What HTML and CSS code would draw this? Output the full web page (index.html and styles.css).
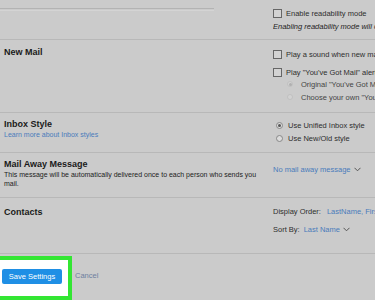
FILE: index.html
```html
<!DOCTYPE html>
<html>
<head>
<meta charset="utf-8">
<link rel="stylesheet" href="styles.css">
</head>
<body>
<div class="page">
  <section class="sec s1">
    <div class="left"><div class="toplines"></div></div>
    <div class="right">
      <div class="opt"><span class="cb"></span>Enable readability mode</div>
      <div class="note">Enabling readability mode will change how messages look</div>
    </div>
  </section>

  <section class="sec s2">
    <div class="left"><h2>New Mail</h2></div>
    <div class="right">
      <div class="opt"><span class="cb"></span>Play a sound when new mail arrives</div>
      <div class="opt o2"><span class="cb"></span>Play "You've Got Mail" alert</div>
      <div class="opt sub r1"><span class="rd dis on"></span>Original "You've Got Mail" sound</div>
      <div class="opt sub r2"><span class="rd dis"></span>Choose your own "You've Got Mail" sound</div>
    </div>
  </section>

  <section class="sec s3">
    <div class="left">
      <h2>Inbox Style</h2>
      <a class="link">Learn more about Inbox styles</a>
    </div>
    <div class="right">
      <div class="opt inb"><span class="rd on"></span>Use Unified Inbox style</div>
      <div class="opt inb i2"><span class="rd"></span>Use New/Old style</div>
    </div>
  </section>

  <section class="sec s4">
    <div class="left">
      <h2>Mail Away Message</h2>
      <p class="desc">This message will be automatically delivered once to each person who sends you mail.</p>
    </div>
    <div class="right">
      <div class="opt drop"><span class="blue">No mail away message</span><svg class="chev" width="7" height="5" viewBox="0 0 7 5"><polyline points="0.5,0.8 3.5,3.8 6.5,0.8" fill="none" stroke="#555" stroke-width="1"/></svg></div>
    </div>
  </section>

  <section class="sec s5">
    <div class="left"><h2>Contacts</h2></div>
    <div class="right">
      <div class="opt kv k1"><span class="key">Display Order:</span><span class="blue v1">LastName, FirstName</span></div>
      <div class="opt kv k2"><span class="key">Sort By:</span><span class="blue v2">Last Name</span><svg class="chev" width="7" height="5" viewBox="0 0 7 5"><polyline points="0.5,0.8 3.5,3.8 6.5,0.8" fill="none" stroke="#555" stroke-width="1"/></svg></div>
    </div>
  </section>

  <section class="bottom">
    <div class="hl"><button class="save">Save Settings</button></div>
    <a class="cancel">Cancel</a>
  </section>
</div>
</body>
</html>
```

FILE: styles.css
```css
* { box-sizing: border-box; margin: 0; padding: 0; }
html, body { width: 375px; height: 300px; overflow: hidden; }
body {
  background: #cbcbcb;
  font-family: "Liberation Sans", Arial, sans-serif;
  color: #2a2a2a;
}
.page { width: 375px; }
.sec { display: flex; border-top: 1px solid #b8b8b8; }
.s1 { border-top: none; height: 39px; }
.s2 { height: 73px; }
.s3 { height: 40px; }
.s4 { height: 45px; }
.s5 { height: 56px; }

.left { width: 273px; flex: none; padding-left: 4px; }
.right { flex: 1; min-width: 0; white-space: nowrap; overflow: hidden; }

.toplines {
  width: 214px;
  margin-left: -4px;
  margin-top: 8px;
  height: 3px;
  border-top: 1px solid #b3b3b3;
  border-bottom: 1px solid #d4d4d4;
}

h2 {
  font-size: 9px;
  font-weight: bold;
  line-height: 10px;
  color: #1a1a1a;
}
.s2 h2 { padding-top: 7px; }
.s3 h2 { padding-top: 6px; }
.s4 h2 { padding-top: 6px; }
.s5 h2 { padding-top: 9px; }

.link {
  display: block;
  margin-top: 1px;
  font-size: 7px;
  line-height: 10px;
  color: #4a7bbb;
}
.desc {
  margin-top: 1px;
  font-size: 7px;
  line-height: 9px;
  color: #222;
  width: 262px;
}

.opt {
  display: flex;
  align-items: center;
  height: 10px;
  font-size: 7.5px;
  color: #2e2e2e;
  gap: 4px;
}
.note {
  margin-top: 4px;
  font-size: 7.5px;
  font-style: italic;
  line-height: 9px;
  color: #222;
}
.s1 .right { padding-top: 8px; }
.s2 .right { padding-top: 9px; }
.s2 .o2 { margin-top: 8px; }
.sub { padding-left: 14px; gap: 8px; color: #444; }
.r1 { margin-top: 2px; }
.r2 { margin-top: 3px; }

.s3 .right { padding-top: 7px; }
.inb { padding-left: 3px; gap: 5px; }
.i2 { margin-top: 3px; }

.s4 .right { padding-top: 11px; }
.drop { gap: 3px; }

.s5 .right { padding-top: 8px; }
.k2 { margin-top: 8px; }
.kv { gap: 0; }
.v1 { margin-left: 6px; }
.v2 { margin-left: 4px; margin-right: 3px; }

.blue { color: #4a7bbb; }

.cb {
  flex: none;
  width: 9px;
  height: 9px;
  border: 1px solid #666;
  background: #d3d3d3;
}
.rd {
  flex: none;
  width: 7px;
  height: 7px;
  border-radius: 50%;
  border: 1px solid #888;
  background: #dcdcdc;
  position: relative;
}
.rd.on::after {
  content: "";
  position: absolute;
  left: 1px;
  top: 1px;
  width: 3px;
  height: 3px;
  border-radius: 50%;
  background: #555;
}
.rd.dis {
  width: 6px;
  height: 6px;
  border-color: #c0c0c0;
  background: #d2d2d2;
}
.rd.dis.on::after { background: #b0b0b0; left: 0.5px; top: 0.5px; }

.chev { flex: none; }

.bottom {
  display: flex;
  align-items: flex-start;
  border-top: 1px solid #b8b8b8;
  padding-top: 2px;
}
.hl {
  flex: none;
  width: 72px;
  height: 44px;
  border: 4px solid #33e633;
  border-left: none;
  background: #ffffff;
  padding-left: 2px;
  padding-top: 9px;
}
.save {
  display: block;
  width: 60px;
  height: 15px;
  border: none;
  border-radius: 2px;
  background: #1f8fe5;
  color: #ffffff;
  font-family: "Liberation Sans", Arial, sans-serif;
  font-size: 7.5px;
  line-height: 15px;
  text-align: center;
}
.cancel {
  margin-left: 3px;
  margin-top: 15px;
  font-size: 7.5px;
  line-height: 10px;
  color: #6d80a0;
}
```
